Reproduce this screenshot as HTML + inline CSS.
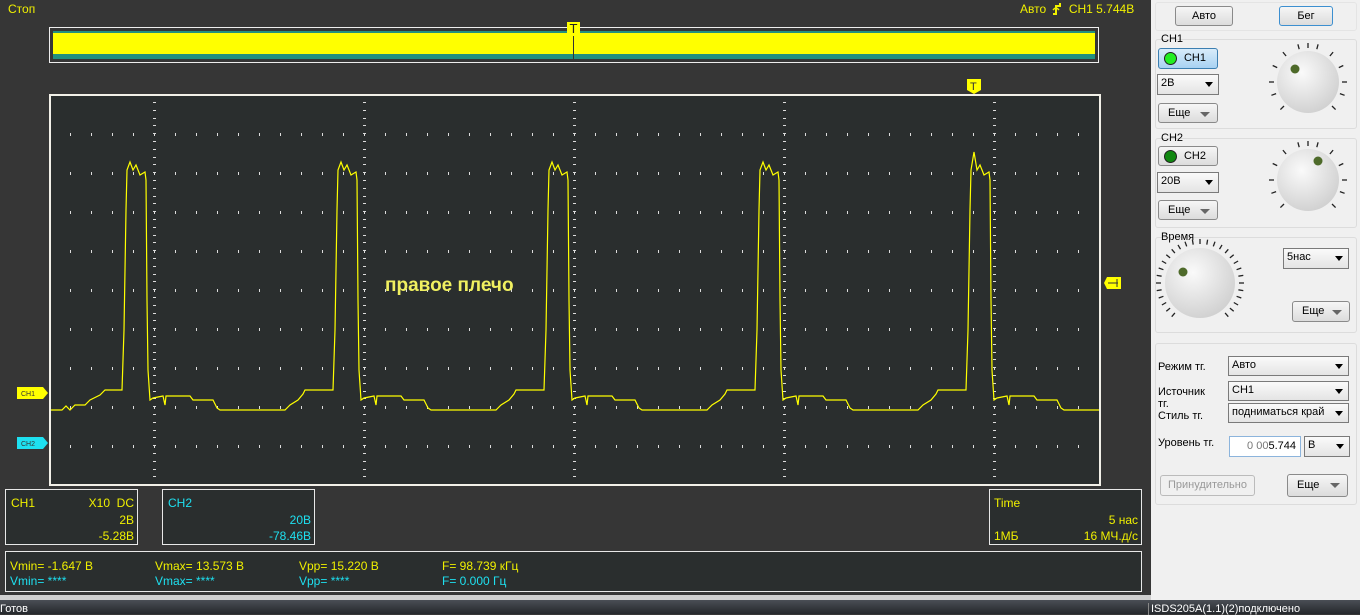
<!DOCTYPE html>
<html><head><meta charset="utf-8"><style>
*{margin:0;padding:0;box-sizing:border-box}
body{width:1360px;height:614px;overflow:hidden;background:#363636;font-family:"Liberation Sans","DejaVu Sans",sans-serif;position:relative}
.a{position:absolute}
.y{color:#f0f000}.c{color:#1ee0f0}
.box{position:absolute;border:1px solid #e8e8e8;background:#2a2e2e;font-size:12px}
.panel{position:absolute;left:1151px;top:0;width:209px;height:600px;background:#f0f0f0;font-size:11px;color:#000}
.grp{position:absolute;border:1px solid #dcdcdc;border-radius:3px;left:4px;width:202px}
.btn{position:absolute;border:1px solid #8a8a8a;border-radius:3px;background:linear-gradient(#f6f6f6,#dcdcdc);text-align:center;font-size:11px;line-height:18px}
.sel{position:absolute;border:1px solid #7a7a7a;background:linear-gradient(#fafafa,#e4e4e4);font-size:11px;line-height:17px;padding-left:3px}
.sel:after{content:"";position:absolute;right:5px;top:7px;border:4px solid transparent;border-top:5px solid #000}
.more:after{content:"";position:absolute;right:7px;top:8px;border:5px solid transparent;border-top:5px solid #666}
.lbl{position:absolute;font-size:11px}
</style></head><body>
<div class="a y" style="left:8px;top:2px;font-size:12px">Стоп</div>
<div class="a y" style="left:1020px;top:2px;font-size:12px">Авто <svg width="10" height="13" style="vertical-align:-2px;margin:0 3px"><path d="M1 12h3V4h4V1" fill="none" stroke="#f0f000" stroke-width="2"/><path d="M3 6l-2 2M5 6l2 2" stroke="#f0f000" stroke-width="1.5"/></svg> CH1 5.744B</div>
<!-- overview -->
<div class="a" style="left:49px;top:27px;width:1050px;height:36px;border:1px solid #eee;background:#363636"></div>
<div class="a" style="left:53px;top:31px;width:1042px;height:28px;background:#23907f"></div>
<div class="a" style="left:53px;top:33px;width:1042px;height:21px;background:#ffff00"></div>
<div class="a" style="left:567px;top:22px;width:13px;height:14px;background:#ffff00;color:#222;font-size:13px;line-height:13px;text-align:center">T</div>
<div class="a" style="left:573px;top:36px;width:1px;height:23px;background:#333"></div>
<!-- plot -->
<div class="a" style="left:49px;top:94px;width:1052px;height:392px;border:2px solid #f2f0e8;background:#2a2e2e"></div>
<svg class="a" style="left:0;top:0" width="1150" height="600" id="sv">
<g id="grid"></g>
<clipPath id="cp"><rect x="51" y="96" width="1048" height="388"/></clipPath>
<path clip-path="url(#cp)" fill="none" stroke="#ffff00" stroke-width="1.2" d="M51 410 H62 l4 -4 l4 4 l5 -5 l10 0 l5 -5 l10 -5 l5 -5 l17 0 l2 -60 l2 -120 l1 -40 l3 -8 l3 8 l3 -5 l4 10 l5 -3 l1 8 l1 120 l1 70 l2 30 l3 -2 l10 -2 l2 9 l1 -9 l24 0 l3 4 l20 0 l4 8 l3 2 l65 0 l5 -5 l8 -5 l5 -6 l2 -4 l28 0 l2 -60 l2 -120 l1 -40 l3 -8 l3 8 l3 -5 l4 10 l5 -3 l1 8 l1 120 l1 70 l2 30 l3 -2 l10 -2 l2 9 l1 -9 l24 0 l3 4 l20 0 l4 8 l3 2 l65 0 l5 -5 l8 -5 l5 -6 l2 -4 l28 0 l2 -60 l2 -120 l1 -40 l3 -8 l3 8 l3 -5 l4 10 l5 -3 l1 8 l1 120 l1 70 l2 30 l3 -2 l10 -2 l2 9 l1 -9 l24 0 l3 4 l20 0 l4 8 l3 2 l65 0 l5 -5 l8 -5 l5 -6 l2 -4 l28 0 l2 -60 l2 -120 l1 -40 l3 -8 l3 8 l3 -5 l4 10 l5 -3 l1 8 l1 120 l1 70 l2 30 l3 -2 l10 -2 l2 9 l1 -9 l24 0 l3 4 l20 0 l4 8 l3 2 l65 0 l5 -5 l8 -5 l5 -6 l2 -4 l28 0 l2 -60 l2 -120 l1 -40 l3 -18 l3 18 l3 -5 l4 10 l5 -3 l1 8 l1 120 l1 70 l2 30 l3 -2 l10 -2 l2 9 l1 -9 l24 0 l3 4 l20 0 l4 8 l3 2 l65 0 l5 -5"/>
<text x="385" y="291" fill="#f0f060" font-size="19" font-weight="bold" font-family="Liberation Sans, sans-serif">правое плечо</text>
<path d="M17 387 h26 l5 6 l-5 6 h-26z" fill="#ffff00"/><text x="21" y="396" font-size="7" fill="#333">CH1</text>
<path d="M17 437 h26 l5 6 l-5 6 h-26z" fill="#1ee0f0"/><text x="21" y="446" font-size="7" fill="#333">CH2</text>
<path d="M967 79 h14 v11 l-7 4 l-7 -4z" fill="#ffff00"/><text x="970" y="90" font-size="11" fill="#333">T</text>
<path d="M1104 283 l3 -6 h14 v12 h-14z" fill="#ffff00"/><path d="M1108 283h10M1117 279v8" stroke="#333" stroke-width="1"/>
</svg>
<script>
var g=document.getElementById('grid'),s='';
for(var x=70;x<1098;x+=21){for(var y=134;y<480;y+=39){s+='<rect x="'+x+'" y="'+(y-1)+'" width="1" height="3" fill="#ddd"/>';}}
[154,364,574,784,994].forEach(function(x){for(var y=102;y<484;y+=7.8){s+='<rect x="'+(x-1)+'" y="'+y.toFixed(0)+'" width="3" height="1" fill="#ddd"/>';}});
g.innerHTML=s;
</script>
<!-- info boxes -->
<div class="box" style="left:5px;top:489px;width:133px;height:56px"><span class="a y" style="left:5px;top:6px">CH1</span><span class="a y" style="right:3px;top:6px">X10&nbsp; DC</span><span class="a y" style="right:3px;top:23px">2B</span><span class="a y" style="right:3px;top:39px">-5.28B</span></div>
<div class="box" style="left:162px;top:489px;width:153px;height:56px"><span class="a c" style="left:5px;top:6px">CH2</span><span class="a c" style="right:3px;top:23px">20B</span><span class="a c" style="right:3px;top:39px">-78.46B</span></div>
<div class="box" style="left:989px;top:489px;width:153px;height:56px;color:#f0f000"><span class="a" style="left:4px;top:6px">Time</span><span class="a" style="right:3px;top:23px">5 нас</span><span class="a" style="left:4px;top:39px">1МБ</span><span class="a" style="right:3px;top:39px">16 МЧ.д/с</span></div>
<div class="box" style="left:5px;top:551px;width:1137px;height:41px">
<span class="a y" style="left:4px;top:7px">Vmin= -1.647 B</span><span class="a y" style="left:149px;top:7px">Vmax= 13.573 B</span><span class="a y" style="left:293px;top:7px">Vpp= 15.220 B</span><span class="a y" style="left:436px;top:7px">F= 98.739 кГц</span>
<span class="a c" style="left:4px;top:22px">Vmin= ****</span><span class="a c" style="left:149px;top:22px">Vmax= ****</span><span class="a c" style="left:293px;top:22px">Vpp= ****</span><span class="a c" style="left:436px;top:22px">F= 0.000 Гц</span></div>
<div class="a" style="left:0;top:595px;width:1151px;height:5px;background:#cfcfcf"></div>
<div class="a" style="left:0;top:600px;width:1360px;height:14px;background:linear-gradient(#4a4e55,#25282c);color:#fff;font-size:11px"><span class="a" style="left:0;top:3px">Готов</span><span class="a" style="left:1148px;top:3px;border-left:1px solid #888;padding-left:2px">ISDS205A(1.1)(2)подключено</span></div>
<!-- right panel -->
<div class="panel">
<div class="grp" style="top:2px;height:29px;border-color:#e4e4e4"></div>
<div class="btn" style="left:24px;top:6px;width:58px;height:20px">Авто</div>
<div class="btn" style="left:128px;top:6px;width:54px;height:20px;border-color:#3c8fd0">Бег</div>
<div class="grp" style="top:39px;height:90px"></div>
<div class="lbl" style="left:10px;top:33px">CH1</div>
<div class="btn" style="left:7px;top:48px;width:60px;height:21px;background:linear-gradient(#d8ecfa,#a8d2f2);border-color:#3c7fb1;line-height:19px;padding-left:14px">CH1<span class="a" style="left:5px;top:3px;width:13px;height:13px;border-radius:50%;background:#22ee22;border:1px solid #222"></span></div>
<div class="sel" style="left:6px;top:74px;width:62px;height:21px">2B</div>
<div class="btn more" style="left:7px;top:103px;width:60px;height:20px;text-align:left;padding-left:9px">Еще</div>
<div class="grp" style="top:138px;height:90px"></div>
<div class="lbl" style="left:10px;top:132px">CH2</div>
<div class="btn" style="left:7px;top:146px;width:60px;height:20px;padding-left:14px">CH2<span class="a" style="left:5px;top:3px;width:13px;height:13px;border-radius:50%;background:#118811;border:1px solid #222"></span></div>
<div class="sel" style="left:6px;top:172px;width:62px;height:21px">20B</div>
<div class="btn more" style="left:7px;top:200px;width:60px;height:20px;text-align:left;padding-left:9px">Еще</div>
<div class="grp" style="top:237px;height:96px"></div>
<div class="lbl" style="left:10px;top:231px">Время</div>
<div class="sel" style="left:132px;top:248px;width:66px;height:21px">5нас</div>
<div class="btn more" style="left:141px;top:301px;width:58px;height:21px;text-align:left;padding-left:9px">Еще</div>
<div class="grp" style="top:343px;height:162px"></div>
<div class="lbl" style="left:7px;top:361px">Режим тг.</div>
<div class="sel" style="left:77px;top:356px;width:121px;height:20px">Авто</div>
<div class="lbl" style="left:7px;top:386px">Источник<br>тг.</div>
<div class="sel" style="left:77px;top:381px;width:121px;height:20px">CH1</div>
<div class="lbl" style="left:7px;top:410px;background:#f0f0f0">Стиль тг.</div>
<div class="sel" style="left:77px;top:403px;width:121px;height:20px">подниматься край</div>
<div class="lbl" style="left:7px;top:437px">Уровень тг.</div>
<div class="a" style="left:78px;top:436px;width:72px;height:21px;border:1px solid #8cb4dc;background:#fff;text-align:right;padding-right:4px;line-height:19px;font-size:11px;color:#777">0 00<span style="color:#000">5.744</span></div>
<div class="sel" style="left:153px;top:436px;width:46px;height:21px">B</div>
<div class="btn" style="left:9px;top:475px;width:95px;height:21px;color:#999;border-color:#bbb;background:#f0f0f0">Принудительно</div>
<div class="btn more" style="left:136px;top:474px;width:61px;height:23px;text-align:left;padding-left:9px;line-height:21px">Еще</div>
</div>
<svg class="a" style="left:1151px;top:0" width="209" height="340" id="kn">
<defs><radialGradient id="kg" cx="0.4" cy="0.35" r="0.7"><stop offset="0" stop-color="#fafafa"/><stop offset="1" stop-color="#cfcfcf"/></radialGradient></defs>
<g id="ticks" stroke="#222" stroke-width="1.3"></g>
<circle cx="157" cy="82" r="31" fill="url(#kg)"/><circle cx="144" cy="69" r="4.5" fill="#4e6a2a"/>
<circle cx="157" cy="180" r="31" fill="url(#kg)"/><circle cx="167" cy="161" r="4.5" fill="#4e6a2a"/>
<circle cx="49" cy="283" r="35" fill="url(#kg)"/><circle cx="32" cy="272" r="4.5" fill="#4e6a2a"/>
</svg>
<script>
(function(){var t='';
function tk(cx,cy,r1,r2,angs){angs.forEach(function(a){var q=a*Math.PI/180,s=Math.sin(q),c=-Math.cos(q);t+='<line x1="'+(cx+r1*s).toFixed(1)+'" y1="'+(cy+r1*c).toFixed(1)+'" x2="'+(cx+r2*s).toFixed(1)+'" y2="'+(cy+r2*c).toFixed(1)+'"/>';});}
var a1=[-135,-110,-90,-65,-40,-15,0,15,40,65,90,110,135];
tk(157,82,34,39,a1);tk(157,180,34,39,a1);
var a3=[];for(var a=-140;a<=140;a+=10)a3.push(a);
tk(49,283,39,44,a3);
document.getElementById('ticks').innerHTML=t;})();
</script>
</body></html>
